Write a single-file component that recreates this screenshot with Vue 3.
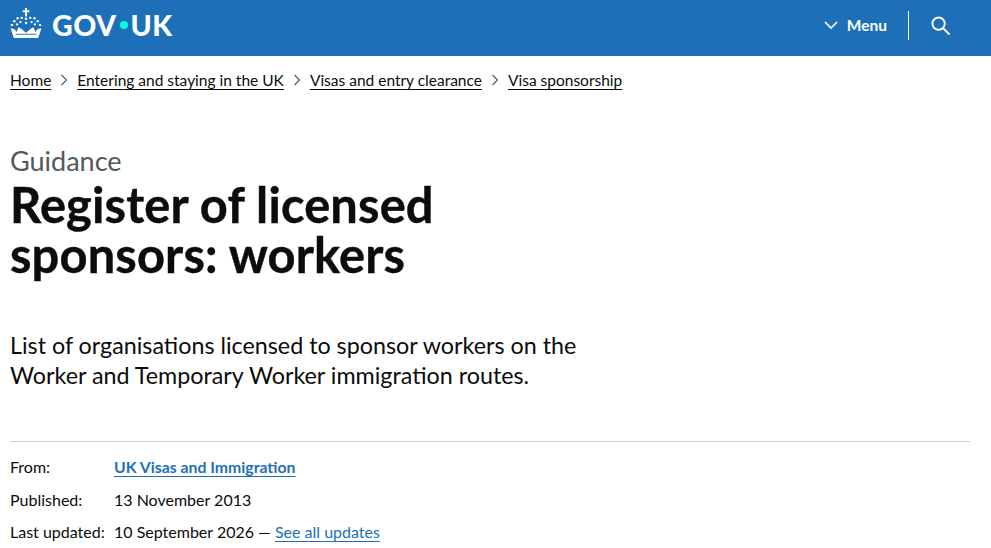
<template>
  <div class="page">
    <header class="top">
      <a class="logo" href="#">
        <svg class="crown" viewBox="0 0 34 32" width="32" height="30">
          <g fill="#fff">
            <rect x="16" y="0" width="2" height="9" />
            <rect x="13.5" y="2.500" width="7" height="2" />
            <circle cx="17" cy="11.500" r="1.300" />
            <circle cx="12.500" cy="10.500" r="1.300" />
            <circle cx="21.500" cy="10.500" r="1.300" />
            <circle cx="8" cy="11" r="1.300" />
            <circle cx="26" cy="11" r="1.300" />
            <circle cx="4.500" cy="14" r="1.300" />
            <circle cx="29.500" cy="14" r="1.300" />
            <circle cx="2" cy="18" r="1.300" />
            <circle cx="32" cy="18" r="1.300" />
            <circle cx="17" cy="16" r="1.300" />
            <circle cx="11" cy="15" r="1.200" />
            <circle cx="23" cy="15" r="1.200" />
            <circle cx="7.500" cy="17.500" r="1.200" />
            <circle cx="26.500" cy="17.500" r="1.200" />
            <path d="M0.500 21.500l4 1 2.500 3 2-5 3 1.500 5 4.500 5-4.500 3-1.500 2 5 2.500-3 4-1-3.500 10.500H4z" />
          </g>
          <path d="M6 28h22" stroke="#1d70b8" stroke-width="1" />
        </svg>
        <span class="logo-text">GOV<span class="dot"></span>UK</span>
      </a>
      <nav class="top-nav">
        <button class="menu-btn">
          <svg viewBox="0 0 14 10" width="14" height="10"><path d="M1 2l6 6 6-6" fill="none" stroke="#fff" stroke-width="1.600" /></svg>
          <span>Menu</span>
        </button>
        <span class="divider"></span>
        <button class="search-btn">
          <svg viewBox="0 0 20 20" width="19" height="19">
            <circle cx="8" cy="8" r="6.500" fill="none" stroke="#fff" stroke-width="2" />
            <path d="M12.500 12.500L19.500 19.500" stroke="#fff" stroke-width="2.200" />
          </svg>
        </button>
      </nav>
    </header>

    <main class="content">
      <ol class="crumbs">
        <li v-for="(c, i) in crumbs" :key="c">
          <svg v-if="i > 0" class="chev" viewBox="0 0 8 12" width="8" height="12"><path d="M1.500 1l5 5-5 5" fill="none" stroke="#505a5f" stroke-width="1.100" /></svg>
          <a href="#">{{ c }}</a>
        </li>
      </ol>

      <p class="caption">Guidance</p>
      <h1>Register of licensed<br />sponsors: workers</h1>
      <p class="lead">List of organisations licensed to sponsor workers on the<br />Worker and Temporary Worker immigration routes.</p>

      <dl class="meta">
        <dt>From:</dt>
        <dd><a class="org" href="#">UK Visas and Immigration</a></dd>
        <dt>Published:</dt>
        <dd>13 November 2013</dd>
        <dt>Last updated:</dt>
        <dd>10 September 2026 — <a href="#">See all updates</a></dd>
      </dl>
    </main>
  </div>
</template>

<script setup>
const crumbs = ['Home', 'Entering and staying in the UK', 'Visas and entry clearance', 'Visa sponsorship']
</script>

<style>
html, body { background: #fff; overflow: hidden; }
</style>

<style scoped>
.page {
  font-family: Lato, "Liberation Sans", sans-serif;
  color: #0b0c0c;
  height: 548px;
  overflow: hidden;
}
.top {
  background: #1d70b8;
  height: 56px;
  display: flex;
  align-items: center;
  justify-content: space-between;
  padding: 0 41px 0 10px;
}
.logo {
  display: flex;
  align-items: center;
  gap: 10px;
  color: #fff;
  text-decoration: none;
  margin-top: -6px;
}
.crown { margin-top: -4px; }
.logo-text {
  font-size: 28.5px;
  font-weight: 900;
  letter-spacing: 0.5px;
  display: flex;
  align-items: center;
}
.dot {
  width: 8px;
  height: 8px;
  border-radius: 50%;
  background: #00ffe0;
  margin: 0 3px;
}
.top-nav {
  display: flex;
  align-items: center;
  margin-top: -6px;
}
.menu-btn {
  display: flex;
  align-items: center;
  gap: 9px;
  background: none;
  border: 0;
  padding: 0;
  color: #fff;
  font: 700 15.5px Lato, sans-serif;
}
.divider {
  width: 1px;
  height: 29px;
  background: #fff;
  margin: 0 22px 0 21px;
}
.search-btn {
  background: none;
  border: 0;
  padding: 0;
  display: flex;
}
.content { padding: 0 21px 0 10px; }
.crumbs {
  list-style: none;
  margin: 0;
  padding: 14px 0 0;
  display: flex;
  font-size: 15.5px;
  line-height: 20px;
}
.crumbs li { display: flex; align-items: center; }
.crumbs a { color: #0b0c0c; text-decoration: underline; text-underline-offset: 3px; }
.chev { margin: 0 9px; }
.caption {
  margin: 56px 0 0;
  font-size: 27px;
  line-height: 30px;
  color: #505a5f;
}
h1 {
  margin: 3px 0 0;
  font-size: 48.800px;
  line-height: 50px;
  font-weight: 700;
  letter-spacing: 0.15px;
  -webkit-text-stroke: 0.4px #0b0c0c;
}
.lead {
  margin: 51px 0 0;
  font-size: 23.3px;
  line-height: 30px;
}
.meta {
  margin: 51px 0 0;
  border-top: 1px solid #cecece;
  padding-top: 15px;
  display: grid;
  grid-template-columns: 104px 1fr;
  row-gap: 12.5px;
  font-size: 16px;
  line-height: 20px;
}
.meta dd { margin: 0; }
.meta a { color: #1d70b8; text-underline-offset: 3px; }
.meta .org { font-weight: 700; font-size: 15.8px; }
</style>
